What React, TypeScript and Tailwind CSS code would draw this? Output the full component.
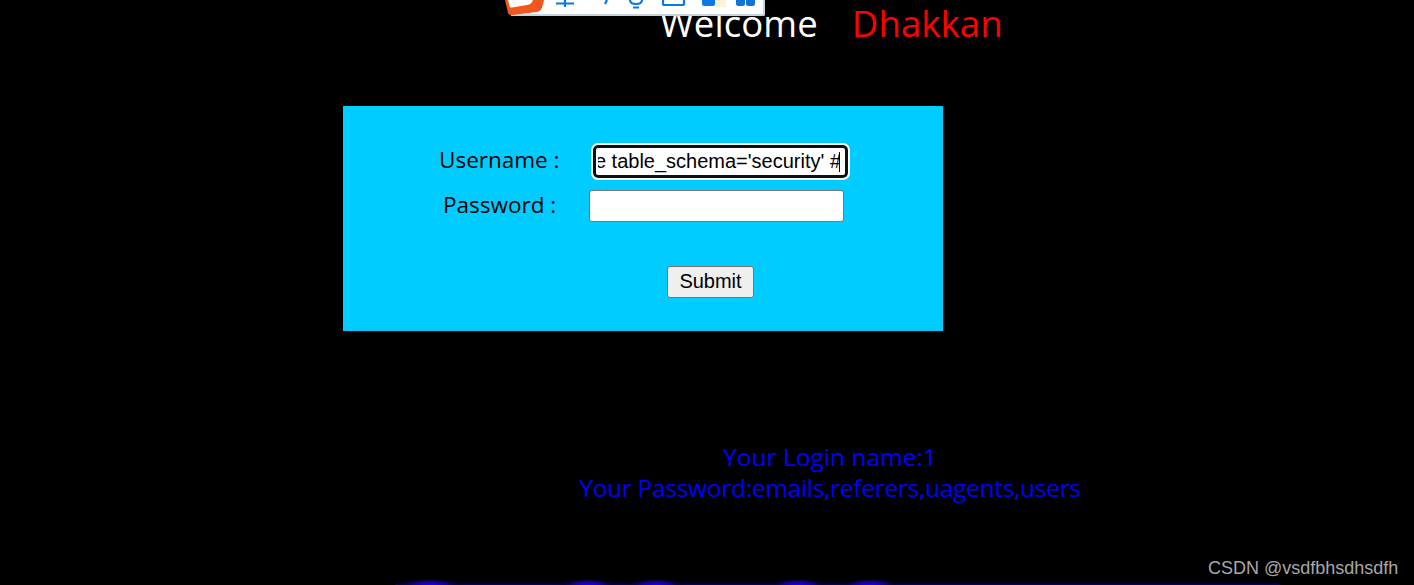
export default function App() {
  const ui = { fontFamily: '"Open Sans", "Noto Sans", sans-serif' };
  const arial = { fontFamily: '"Liberation Sans", Arial, sans-serif' };
  return (
    <div className="relative h-[585px] w-[1414px] overflow-hidden bg-black" style={ui}>
      {/* clipped floating toolbar */}
      <div className="absolute left-[511px] top-0 h-[16px] w-[254px] rounded-br-[2px] border-b-2 border-r-2 border-[#c9d3de] bg-white">
        <svg className="absolute left-0 top-0" width="254" height="16" viewBox="0 0 254 16">
          <g fill="none" stroke="#0a78e6" strokeWidth="2.2">
            <path d="M45 3.500h18M54 0v7" />
            <path d="M94 4 L96 0" />
            <path d="M119 0c0 3 3 4 6 4s6-1 6-4M122 7.500h6" />
            <path d="M152 0v3.500a1.500 1.500 0 0 0 1.500 1.500h18a1.500 1.500 0 0 0 1.500-1.500V0" />
          </g>
          <path d="M191 0h13v3.500a2.500 2.500 0 0 1-2.500 2.500h-8A2.500 2.500 0 0 1 191 3.500z" fill="#0a78e6" />
          <rect x="204" y="0" width="11" height="7" fill="#fbf3d9" />
          <path d="M225 0h9v3.500a2.500 2.500 0 0 1-2.500 2.500h-4A2.500 2.500 0 0 1 225 3.500zM235 0h9v3.500a2.500 2.500 0 0 1-2.500 2.500h-4A2.500 2.500 0 0 1 235 3.500z" fill="#1273d6" />
        </svg>
      </div>
      <svg className="absolute left-[500px] top-0" width="48" height="18" viewBox="0 0 48 18">
        <path d="M5 0h39l-2 8c-1 2-2 3-5 4L12 15c-2 .300-3-.500-4-2z" fill="#f0561d" />
        <path d="M8 0h25c-1 3-3 4.500-6 5L12 7.500c-1.500 .200-2-.300-2.500-1.500z" fill="#fff" />
      </svg>

      <header className="flex h-[106px] items-start gap-[34px] pl-[660px] text-[36.500px] leading-[47px] tracking-[0.1px]">
        <span className="text-white">Welcome</span>
        <span className="text-[#ff0000]">Dhakkan</span>
      </header>

      <form className="ml-[343px] flex h-[225px] w-[600px] flex-col bg-[#00ccff] text-black">
        <div className="flex h-[84px] items-start pt-[36px]">
          <label className="w-[250px] pl-[96px] text-[22.500px] leading-[36px]">Username :</label>
          <div className="mt-[3px] flex h-[33px] w-[255px] items-center overflow-hidden rounded-[5px] border-[3px] border-[#101010] bg-white pl-[2px] pr-[5px] text-[20px] leading-[27px] outline-2 outline-white" style={arial}>
            <div className="flex h-[27px] min-w-0 flex-1 items-center justify-end overflow-hidden">
              <span className="whitespace-nowrap">where table_schema='security' #</span>
              <span className="ml-[-2px] h-[20px] w-px shrink-0 bg-black" />
            </div>
          </div>
        </div>
        <div className="flex h-[76px] items-start">
          <label className="w-[246px] pl-[100px] text-[22.500px] leading-[29px]">Password :</label>
          <input type="password" className="h-[32px] w-[255px] rounded-[3px] border border-[#767676] bg-white" />
        </div>
        <div className="pl-[324px]">
          <button type="button" className="h-[32px] w-[87px] rounded-[3px] border border-[#767676] bg-[#efefef] pb-[2px] text-[20px] leading-none text-black" style={arial}>
            Submit
          </button>
        </div>
      </form>

      <div className="ml-[530px] mt-[110px] w-[600px] text-center text-[24.500px] leading-[31px] text-[#0000ff]">
        <p className="whitespace-nowrap">Your Login name:1</p>
        <p className="whitespace-nowrap tracking-[-0.3px]">Your Password:emails,referers,uagents,users</p>
      </div>

      {/* blue glow of clipped text along the bottom edge */}
      <svg className="absolute bottom-0 left-[380px]" width="920" height="12" viewBox="0 0 920 12">
        <defs>
          <radialGradient id="g">
            <stop offset="0" stopColor="#2200d8" />
            <stop offset="0.5" stopColor="#14008c" />
            <stop offset="1" stopColor="#000" stopOpacity="0" />
          </radialGradient>
          <linearGradient id="h" x1="0" y1="0" x2="0" y2="1">
            <stop offset="0" stopColor="#000" stopOpacity="0" />
            <stop offset="1" stopColor="#08006e" />
          </linearGradient>
        </defs>
        <rect x="15" y="8" width="885" height="4" fill="url(#h)" />
        {[[50, 34], [208, 30], [276, 30], [418, 30], [490, 30]].map(([x, w]) => (
          <ellipse key={x} cx={x} cy="12" rx={w} ry="7" fill="url(#g)" />
        ))}
      </svg>

      <span className="absolute left-[1208px] top-[558px] text-[18px] leading-[20px] text-[#a8a8a8]" style={arial}>
        CSDN @vsdfbhsdhsdfh
      </span>
    </div>
  );
}
